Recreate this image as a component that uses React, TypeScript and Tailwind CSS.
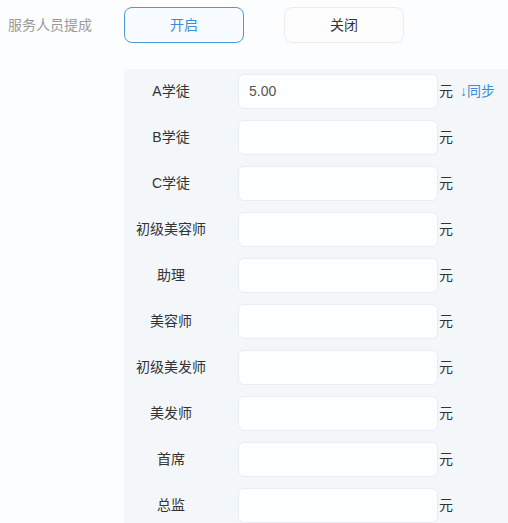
const roles = [
  { name: 'A学徒', value: '5.00', sync: true },
  { name: 'B学徒', value: '' },
  { name: 'C学徒', value: '' },
  { name: '初级美容师', value: '' },
  { name: '助理', value: '' },
  { name: '美容师', value: '' },
  { name: '初级美发师', value: '' },
  { name: '美发师', value: '' },
  { name: '首席', value: '' },
  { name: '总监', value: '' },
];

export default function App() {
  return (
    <div className="h-[523px] w-[508px] overflow-hidden bg-[#fcfdfe] font-['Liberation_Sans','Noto_Sans_CJK_SC',sans-serif] text-[14px]">
      <div className="flex items-center pt-[7px]">
        <span className="w-[124px] pl-[8px] text-[14px] text-[#9a9a9a]">服务人员提成</span>
        <button className="flex h-[36px] w-[120px] items-center justify-center rounded-[8px] border border-[#4d9bd6] bg-[#f8fbff] text-[14px] text-[#3a8dd6]">
          开启
        </button>
        <button className="ml-[40px] flex h-[36px] w-[120px] items-center justify-center rounded-[8px] border border-[#ececec] bg-[#fdfdfd] text-[14px] text-[#333]">
          关闭
        </button>
      </div>
      <div className="ml-[124px] mt-[26px] flex flex-col gap-[11px] bg-[#f3f7fa] pt-[5px]">
        {roles.map((r) => (
          <div key={r.name} className="flex h-[35px] items-center">
            <span className="w-[94px] text-center text-[14px] text-[#333]">{r.name}</span>
            <div className="ml-[20px] flex h-[35px] w-[200px] items-center rounded-[6px] border border-[#e8edf2] bg-[#fdfeff] px-[10px] text-[14px] text-[#555]">
              {r.value}
            </div>
            <span className="ml-[1px] text-[14px] text-[#333]">元</span>
            {r.sync && <span className="ml-[7px] text-[14px] text-[#3a8dd6]">↓同步</span>}
          </div>
        ))}
      </div>
    </div>
  );
}
